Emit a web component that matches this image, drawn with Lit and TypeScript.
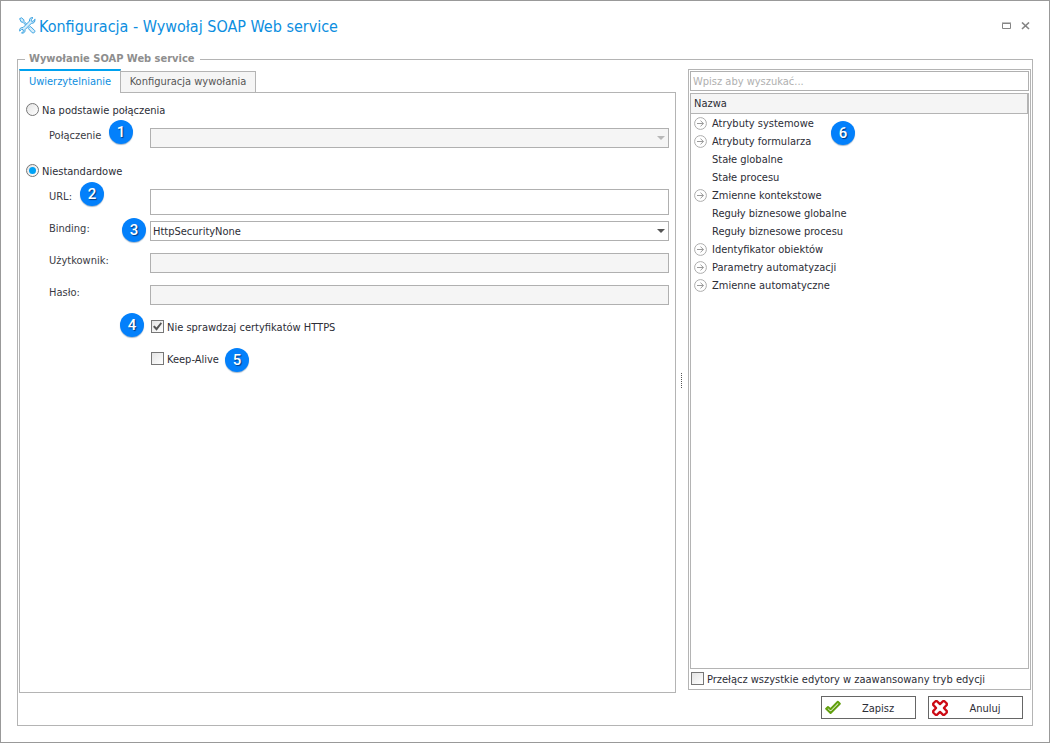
import { LitElement, html, css, nothing } from "lit";
import { customElement, state } from "lit/decorators.js";

interface TreeItem {
  name: string;
  group: boolean;
}

const ITEMS: TreeItem[] = [
  { name: "Atrybuty systemowe", group: true },
  { name: "Atrybuty formularza", group: true },
  { name: "Stałe globalne", group: false },
  { name: "Stałe procesu", group: false },
  { name: "Zmienne kontekstowe", group: true },
  { name: "Reguły biznesowe globalne", group: false },
  { name: "Reguły biznesowe procesu", group: false },
  { name: "Identyfikator obiektów", group: true },
  { name: "Parametry automatyzacji", group: true },
  { name: "Zmienne automatyczne", group: true },
];

const expandIcon = html`<svg class="expand" width="13" height="13" viewBox="0 0 13 13" aria-hidden="true">
  <circle cx="6.5" cy="6.5" r="5.9" fill="#fff" stroke="#adadad" />
  <path d="M3 6.5h6.5M6.5 3.7l2.9 2.8-2.9 2.8" fill="none" stroke="#9a9a9a" />
</svg>`;

const toolsIcon = html`<svg class="tools" width="17" height="17" viewBox="0 0 17 17" aria-hidden="true">
  <g fill="#d5edfb" stroke="#3ba3e2" stroke-width="1" stroke-linejoin="round" stroke-linecap="round">
    <path d="M1 1.5 2.500.8l2.300 1.900.2 1.700 4.300 4.300-1 1L4 5.300l-1.600-.4z" />
    <path d="M9.500 11.200c.4-1.100 1.300-1.800 2.300-1.500l4 4c.5 1.400-.9 2.700-2.200 2.200z" />
    <path d="M15.900 2.600 13.900 4.400l-1.600-.3-.2-1.600L14 .7c-2.300-.6-4 1.100-3.500 3.300L4 10.600c-2.200-.5-3.900 1.200-3.300 3.500l1.900-1.800 1.500.4.3 1.500-1.900 1.900c2.300.5 4-1.200 3.500-3.400l6.500-6.500c2.200.4 3.900-1.300 3.400-3.600z" />
  </g>
</svg>`;

const saveIcon = html`<svg width="16" height="15" viewBox="0 0 16 15" aria-hidden="true">
  <path d="M1.200 8.700 3 7l2.500 2.300L12.800 1.800l2 2L5.600 13z" fill="#fff" stroke="#62a00f" stroke-width="2" stroke-linejoin="round" />
</svg>`;

const cancelIcon = html`<svg width="16" height="16" viewBox="0 0 16 16" aria-hidden="true">
  <path d="M1.200 3.500 3.500 1.200h1.400L8 4.100l3.100-2.900h1.400l2.300 2.300v1.400L11.900 8l2.900 3.100v1.400l-2.300 2.300h-1.400L8 11.900l-3.100 2.900H3.500l-2.300-2.300v-1.400L4.100 8 1.200 4.900z" fill="#fff" stroke="#cc0a14" stroke-width="2.300" stroke-linejoin="round" />
</svg>`;

@customElement("app-root")
export class AppRoot extends LitElement {
  @state() private custom = true;

  static styles = css`
    :host {
      display: block;
      font: 11px/14px "DejaVu Sans Condensed", "DejaVu Sans", sans-serif;
      color: #2c2d36;
      --line: #b4b4b4;
    }
    *, *::before, *::after { box-sizing: border-box; }
    button, input, select { font: inherit; color: inherit; margin: 0; border-radius: 0; }

    .window {
      height: 100vh;
      min-height: 450px;
      border: 1px solid #999;
      padding: 0 16px 16px;
      display: flex;
      flex-direction: column;
      background: #fff;
    }
    .titlebar {
      height: 51px;
      flex: none;
      display: flex;
      align-items: center;
      gap: 3px;
      padding: 0 0 2px 2px;
    }
    .title { margin: 0; flex: 1; padding-top: 2px; font-size: 16px; line-height: 24px; font-weight: 400; color: #0c8ee0; }
    .winbtn { border: 0; background: none; padding: 3px 3px 3px 4px; width: 16px; height: 14px; display: flex; }

    .group {
      flex: 1;
      min-width: 0;
      margin: 0;
      border: 1px solid var(--line);
      padding: 2px 1px 6px;
      display: flex;
      flex-direction: column;
      gap: 3px;
    }
    .legend { margin-left: 6px; padding: 0 5px 2px 4px; font-weight: 700; line-height: 13px; color: #8e8e8e; }
    .body { flex: 1; display: flex; min-height: 0; }

    .left { flex: 1; min-width: 0; display: flex; flex-direction: column; }
    .tabs { display: flex; position: relative; height: 24px; flex: none; margin-bottom: -1px; }
    .tab { border: 1px solid var(--line); background: #f5f5f5; color: #555; margin-top: 2px; padding: 0; height: 22px; width: 136px; white-space: nowrap; }
    .tab.active { background: #fff; color: #0c8ee0; border-top: 2px solid #00a2f0; border-bottom: 0; margin: 0 -1px 0 0; height: 24px; width: 102px; }
    .panel { flex: 1; border: 1px solid var(--line); padding: 6px; }

    .choice { display: flex; align-items: center; gap: 3px; height: 21px; margin-bottom: 8px; }
    .choice label, .option label, .mode label { padding-top: 3px; }
    .field { position: relative; display: grid; grid-template-columns: 101px 1fr; align-items: start; height: 32px; margin-left: 23px; }
    .caption { color: #3a3b44; padding-top: 1px; }
    .box { display: block; width: 100%; height: 20px; border: 1px solid #b0b0b0; padding: 0 2px; background: #fff; outline: 0; appearance: none; opacity: 1; }
    .box:disabled { background: #f5f5f5; }
    .box.tall { height: 26px; }
    .combo { position: relative; }
    .combo .box { padding: 1px 2px 0; }
    .combo::after { content: ""; position: absolute; right: 4px; top: 8px; border: 4px solid transparent; border-top-color: #555; border-bottom: 0; pointer-events: none; }
    .combo.off::after { border-top-color: #b8b8b8; }
    .option { grid-column: 2; display: flex; align-items: center; gap: 3px; height: 19px; padding-left: 1px; }

    .radio, .check { appearance: none; flex: none; width: 13px; height: 13px; border: 1px solid #777; background: linear-gradient(135deg, #e4e4e4, #fff); position: relative; }
    .radio { border-radius: 50%; }
    .radio:checked::before { content: ""; position: absolute; inset: 2px; border-radius: 50%; background: #00a2f5; }
    .check:checked::before { content: ""; position: absolute; inset: 1px; background: #555; clip-path: polygon(0 52%, 18% 38%, 38% 62%, 86% 4%, 100% 18%, 40% 98%); }

    .badge { position: absolute; width: 24px; height: 24px; border-radius: 50%; background: #0380fb; color: #fff; font: 500 15px/25px Roboto, sans-serif; text-align: center; text-shadow: 1px 1px 1px #003a80; box-shadow: 0 1px 1px #a5b8cc; }
    .at-connection { left: 60px; top: -8px; }
    .at-url { left: 31px; top: -7px; }
    .at-binding { left: 73px; top: -3px; }
    .at-https { left: 71px; top: -4px; }
    .at-alive { left: 176px; top: -1px; }
    .at-tree { left: 140px; top: 27px; }

    .splitter { width: 12px; padding: 0 1px 1px 0; flex: none; display: flex; align-items: center; justify-content: center; }
    .grip { width: 1px; height: 15px; background: repeating-linear-gradient(#555 0 1px, transparent 1px 2px); }

    .right { width: 343px; flex: none; border: 1px solid var(--line); padding: 1px; margin-bottom: 3px; display: flex; flex-direction: column; }
    .search::placeholder { color: #b0b0b0; opacity: 1; }
    .search { flex: none; margin-bottom: 2px; }
    .tree { position: relative; flex: 1; border: 1px solid var(--line); }
    .head { height: 20px; padding: 3px 3px 2px; background: #f5f5f5; border-bottom: 1px solid var(--line); border-right: 1px solid var(--line); }
    .list { list-style: none; margin: 0; padding: 0 3px; }
    .item { display: flex; align-items: center; gap: 5px; height: 18px; padding-left: 18px; }
    .item.parent { padding-left: 0; }
    .item span { padding-top: 2px; }
    .expand { flex: none; }
    .mode { display: flex; align-items: center; gap: 3px; height: 19px; padding: 0 1px; }

    .footer { flex: none; display: flex; justify-content: flex-end; gap: 12px; padding-right: 8px; }
    .action { width: 95px; height: 23px; border: 1px solid #666; background: #fff; padding: 0 0 0 3px; display: flex; align-items: center; }
    .action span { flex: 1; text-align: center; padding-top: 3px; }
  `;

  private badge(n: number, place: string) {
    return html`<span class="badge ${place}">${n}</span>`;
  }

  render() {
    return html`
      <main class="window">
        <header class="titlebar">
          ${toolsIcon}
          <h1 class="title">Konfiguracja - Wywołaj SOAP Web service</h1>
          <button class="winbtn" aria-label="Maksymalizuj">
            <svg width="9" height="8" viewBox="0 0 9 8"><path d="M.5 1.5h8v5h-8zM0 1h9" fill="none" stroke="#858585" /></svg>
          </button>
          <button class="winbtn" aria-label="Zamknij">
            <svg width="9" height="8" viewBox="0 0 9 8"><path d="M1 .5l7 6.500M8 .5l-7 6.500" stroke="#858585" stroke-width="1.600" /></svg>
          </button>
        </header>
        <fieldset class="group">
          <legend class="legend">Wywołanie SOAP Web service</legend>
          <div class="body">
            <section class="left">
              <div class="tabs" role="tablist">
                <button class="tab active" role="tab" aria-selected="true">Uwierzytelnianie</button>
                <button class="tab" role="tab" aria-selected="false">Konfiguracja wywołania</button>
              </div>
              <div class="panel" role="tabpanel">
                <div class="choice">
                  <input class="radio" type="radio" name="mode" id="m1" .checked=${!this.custom} @change=${() => (this.custom = false)} />
                  <label for="m1">Na podstawie połączenia</label>
                </div>
                <div class="field">
                  <label class="caption" for="conn">Połączenie</label>
                  <div class="combo off"><select class="box" id="conn" ?disabled=${this.custom}></select></div>
                  ${this.badge(1, "at-connection")}
                </div>
                <div class="choice">
                  <input class="radio" type="radio" name="mode" id="m2" .checked=${this.custom} @change=${() => (this.custom = true)} />
                  <label for="m2">Niestandardowe</label>
                </div>
                <div class="field">
                  <label class="caption" for="url">URL:</label>
                  <input class="box tall" id="url" type="text" />
                  ${this.badge(2, "at-url")}
                </div>
                <div class="field">
                  <label class="caption" for="binding">Binding:</label>
                  <div class="combo"><select class="box" id="binding"><option>HttpSecurityNone</option></select></div>
                  ${this.badge(3, "at-binding")}
                </div>
                <div class="field">
                  <label class="caption" for="user">Użytkownik:</label>
                  <input class="box" id="user" type="text" disabled />
                </div>
                <div class="field">
                  <label class="caption" for="pass">Hasło:</label>
                  <input class="box" id="pass" type="password" disabled />
                </div>
                <div class="field">
                  <div class="option"><input class="check" type="checkbox" id="https" checked /><label for="https">Nie sprawdzaj certyfikatów HTTPS</label></div>
                  ${this.badge(4, "at-https")}
                </div>
                <div class="field">
                  <div class="option"><input class="check" type="checkbox" id="alive" /><label for="alive">Keep-Alive</label></div>
                  ${this.badge(5, "at-alive")}
                </div>
              </div>
            </section>
            <div class="splitter" role="separator"><div class="grip"></div></div>
            <section class="right">
              <input class="box search" type="text" placeholder="Wpisz aby wyszukać..." aria-label="Wpisz aby wyszukać" />
              <div class="tree">
                <div class="head">Nazwa</div>
                <ul class="list">
                  ${ITEMS.map((i) => html`<li class="item ${i.group ? "parent" : ""}">${i.group ? expandIcon : nothing}<span>${i.name}</span></li>`)}
                </ul>
                ${this.badge(6, "at-tree")}
              </div>
              <div class="mode"><input class="check" type="checkbox" id="adv" /><label for="adv">Przełącz wszystkie edytory w zaawansowany tryb edycji</label></div>
            </section>
          </div>
          <footer class="footer">
            <button class="action">${saveIcon}<span>Zapisz</span></button>
            <button class="action">${cancelIcon}<span>Anuluj</span></button>
          </footer>
        </fieldset>
      </main>
    `;
  }
}
